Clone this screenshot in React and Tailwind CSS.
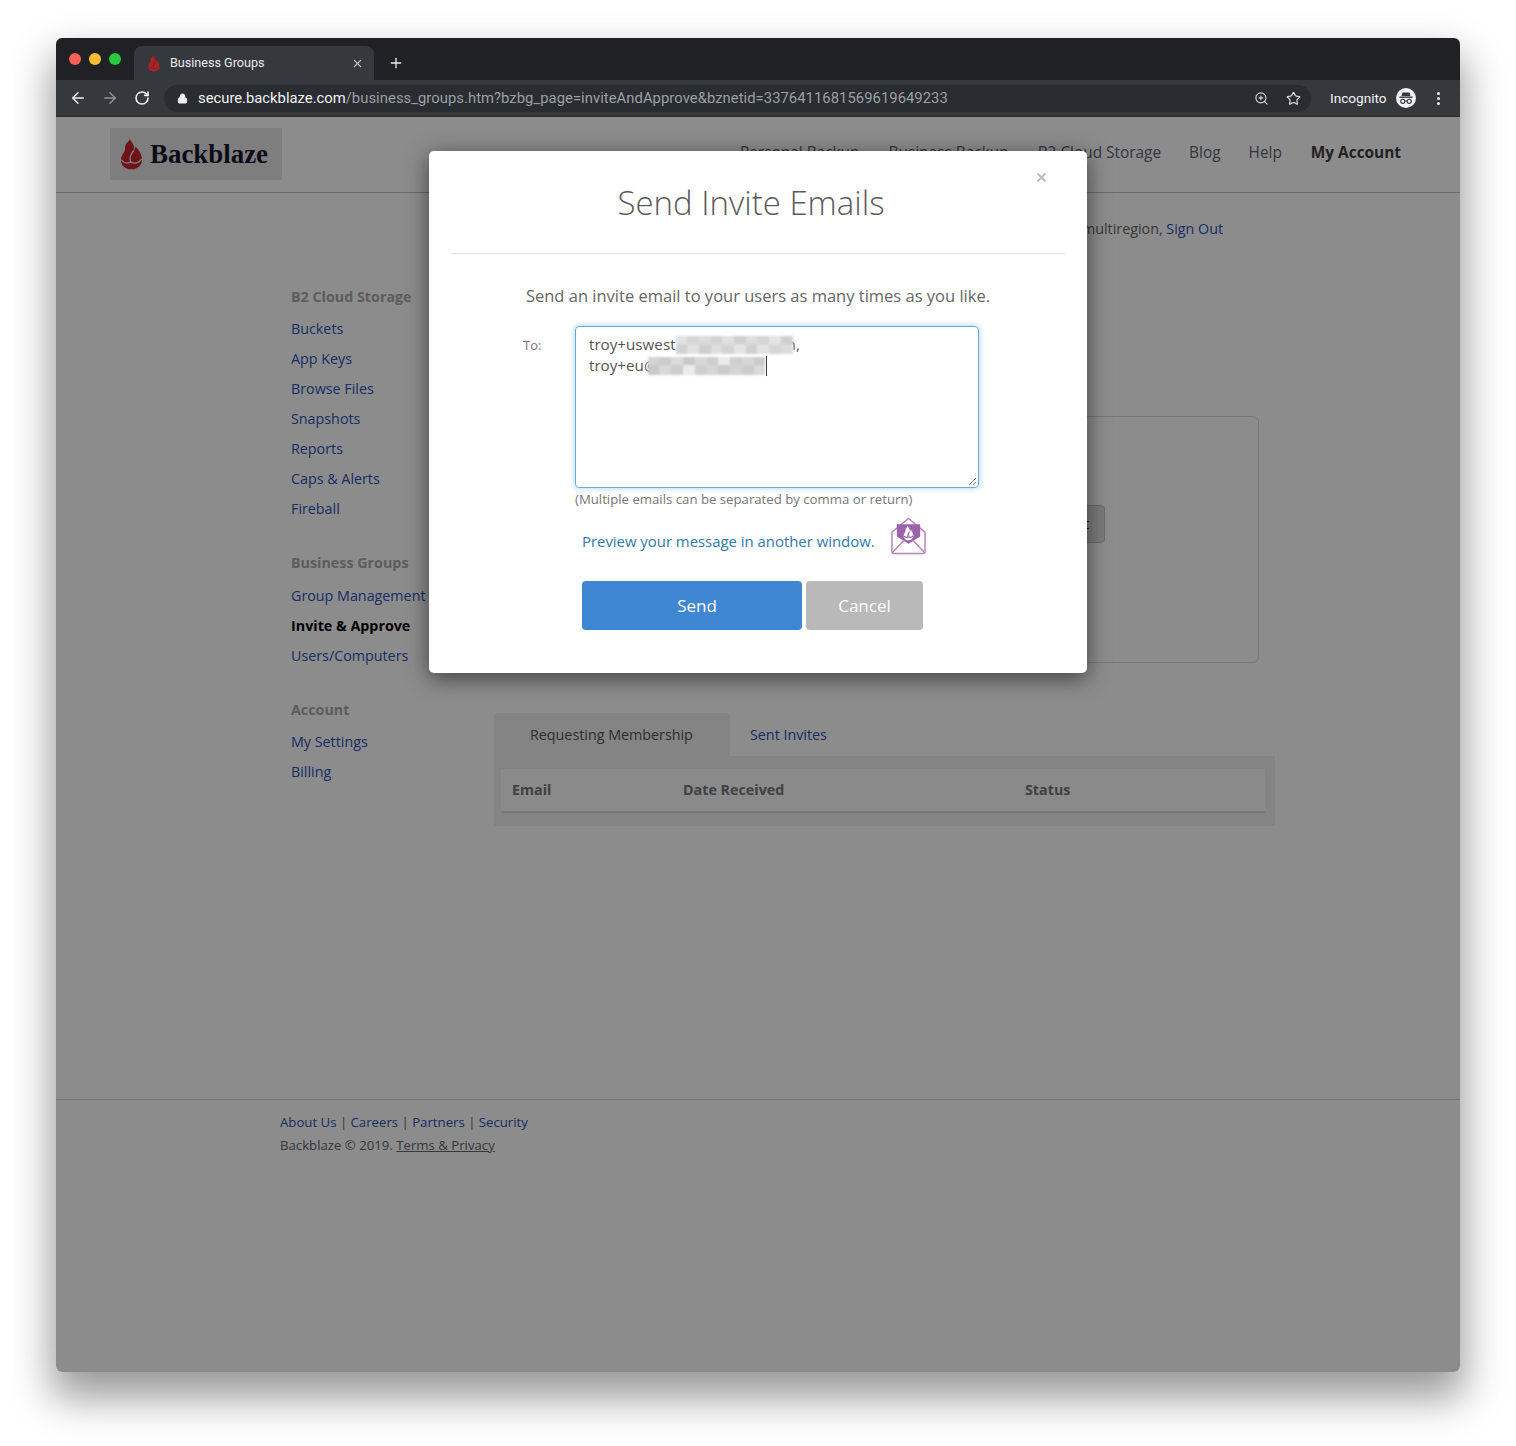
import { ArrowLeft, ArrowRight, RotateCw, Lock, ZoomIn, Star, X, Plus } from 'lucide-react';

const sideGroups = [
  { title: 'B2 Cloud Storage', links: ['Buckets', 'App Keys', 'Browse Files', 'Snapshots', 'Reports', 'Caps & Alerts', 'Fireball'] },
  { title: 'Business Groups', links: ['Group Management', 'Invite & Approve', 'Users/Computers'] },
  { title: 'Account', links: ['My Settings', 'Billing'] },
];

const blurOne = ['#e2e2e2', '#d6d6d6', '#dcdcdc', '#d2d2d2', '#e0e0e0', '#cfcfcf', '#dddddd', '#d4d4d4', '#e4e4e4', '#d0d0d0'];
const blurTwo = ['#d4d4d4', '#cccccc', '#dadada', '#c9c9c9', '#d8d8d8', '#cdcdcd', '#ebebeb', '#cfcfcf', '#d6d6d6', '#cbcbcb'];

const flameBody = 'M10 0C10.500 3.500 15 6.500 15 11c0 1-.2 2-.5 3 1.500-1.500 2-3 2-4.500C19 12.500 24 17 24 24.500 24 31 18.500 35.500 12 35.500S0 31.500 0 25c0-5 2.500-7.500 4-10 1-2.500.5-4 1-7 1-3 5-4 5-8z';

function Flame({ className, color = '#a3171d', gap = '#e6e6e6' }) {
  return (
    <svg className={className} viewBox="0 0 24 36" fill="none">
      <path fill={color} d={flameBody} />
      <path stroke={gap} strokeWidth="1.500" strokeLinecap="round" d="M.5 25c3.500 4 7.500 4 10.500 2 3.500 2 8.500 2 12.500-3" />
      <path stroke={gap} strokeWidth="1.500" strokeLinecap="round" d="M11 27c-2-5 0-8 3.500-13" />
    </svg>
  );
}

function EnvelopeIcon() {
  return (
    <svg className="w-[35px] h-[38px]" viewBox="0 0 36 38" fill="none">
      <path d="M1 15 18 1l17 14v20.500a1.500 1.500 0 0 1-1.500 1.500h-31A1.500 1.500 0 0 1 1 35.500z" stroke="#b583bd" strokeWidth="1.500" strokeLinejoin="round" />
      <path d="M1.500 36 13 24M34.500 36 23 24" stroke="#b583bd" strokeWidth="1.500" />
      <path d="M6 7h24v12.500L18 27 6 19.500z" fill="#9d62a9" />
      <g transform="translate(13 8.500) scale(.42)">
        <path fill="#ffffff" d={flameBody} />
        <path stroke="#9d62a9" strokeWidth="3" d="M.5 25c3.500 4 7.500 4 10.500 2 3.500 2 8.500 2 12.500-3M11 27c-2-5 0-8 3.500-13" />
      </g>
    </svg>
  );
}

function IncognitoIcon() {
  return (
    <svg className="w-[20px] h-[20px]" viewBox="0 0 20 20">
      <circle cx="10" cy="10" r="10" fill="#f1f3f4" />
      <path d="M6.500 4.500h7l1 3.500h-9z" fill="#35383c" />
      <rect x="3.500" y="8.500" width="13" height="1.400" fill="#35383c" />
      <circle cx="6.800" cy="13.300" r="2.100" fill="none" stroke="#35383c" strokeWidth="1.100" />
      <circle cx="13.200" cy="13.300" r="2.100" fill="none" stroke="#35383c" strokeWidth="1.100" />
      <path d="M8.900 13h2.200" stroke="#35383c" strokeWidth="1" />
    </svg>
  );
}

function BlurBlocks({ colors, width, className = '' }) {
  return (
    <span className={`relative inline-flex h-[18px] align-[-4px] blur-[1px] ${className}`} style={{ width }}>
      {colors.map((c, i) => (
        <span key={i} className="flex-1 h-full" style={{ background: `linear-gradient(${c} 45%, ${colors[(i + 3) % colors.length]} 45%)` }} />
      ))}
    </span>
  );
}

function BrowserBar() {
  return (
    <div className="font-['Roboto',sans-serif]">
      <div className="h-[42px] bg-[#202124] flex items-end rounded-t-[6px]">
        <div className="flex gap-[8px] pl-[13px] w-[78px] h-full pt-[15px]">
          <span className="w-[12px] h-[12px] rounded-full bg-[#ff5f57]" />
          <span className="w-[12px] h-[12px] rounded-full bg-[#febc2e]" />
          <span className="w-[12px] h-[12px] rounded-full bg-[#28c840]" />
        </div>
        <div className="w-[240px] h-[34px] bg-[#35383c] rounded-t-[8px] flex items-center pl-[14px] pr-[10px]">
          <Flame className="w-[12px] h-[17px] mr-[10px]" color="#b01f25" gap="#35383c" />
          <span className="flex-1 text-[12.600px] text-[#e8eaed]">Business Groups</span>
          <X className="w-[13px] h-[13px] text-[#bdc1c6]" strokeWidth={2} />
        </div>
        <div className="h-[34px] flex items-center pl-[14px]">
          <Plus className="w-[16px] h-[16px] text-[#e8eaed]" strokeWidth={2} />
        </div>
      </div>
      <div className="h-[37px] bg-[#35383c] border-b border-[#2a2c2f] flex items-center pl-[13px] pr-[14px]">
        <ArrowLeft className="w-[18px] h-[18px] text-[#eef0f1]" strokeWidth={2} />
        <ArrowRight className="w-[18px] h-[18px] ml-[14px] text-[#8f9295]" strokeWidth={2} />
        <RotateCw className="w-[16px] h-[16px] ml-[15px] text-[#eef0f1]" strokeWidth={2.4} />
        <div className="ml-[14px] w-[1147px] h-[27px] bg-[#292c30] rounded-full flex items-center pl-[13px] pr-[10px]">
          <Lock className="w-[11px] h-[11px] text-[#eef0f1] fill-[#eef0f1]" strokeWidth={2} />
          <span className="ml-[10px] flex-1 text-[14.800px] text-[#9aa0a6] whitespace-nowrap tracking-[0.05px]">
            <span className="text-[#f1f3f4] tracking-normal">secure.backblaze.com</span>/business_groups.htm?bzbg_page=inviteAndApprove&bznetid=3376411681569619649233
          </span>
          <ZoomIn className="w-[15px] h-[15px] -ml-[1px] text-[#d5d7d9]" strokeWidth={1.8} />
          <Star className="w-[15px] h-[15px] ml-[17px] text-[#e3e5e7]" strokeWidth={1.8} />
        </div>
        <span className="ml-[19px] text-[13.600px] text-[#f1f3f4]">Incognito</span>
        <span className="ml-[9px]"><IncognitoIcon /></span>
        <span className="ml-[21px] flex flex-col gap-[2px]">
          <span className="w-[3px] h-[3px] rounded-full bg-[#e8eaed]" />
          <span className="w-[3px] h-[3px] rounded-full bg-[#e8eaed]" />
          <span className="w-[3px] h-[3px] rounded-full bg-[#e8eaed]" />
        </span>
      </div>
    </div>
  );
}

function SiteHeader() {
  return (
    <div className="h-[76px] border-b border-[#c4c4c4] flex items-start pl-[54px]">
      <div className="mt-[11px] w-[172px] h-[52px] bg-[#e6e6e6] flex items-center pl-[11px]">
        <Flame className="w-[21px] h-[34px]" color="#c5262c" />
        <span className="ml-[8px] font-['Liberation_Serif',serif] font-bold text-[26.900px] text-[#15152e] leading-none">Backblaze</span>
      </div>
      <nav className="ml-[458px] mt-[24px] flex text-[15.400px] leading-[24px] text-[#5c6470] whitespace-nowrap">
        <span>Personal Backup</span>
        <span className="ml-[29px]">Business Backup</span>
        <span className="ml-[29px]">B2 Cloud Storage</span>
        <span className="ml-[28px]">Blog</span>
        <span className="ml-[28px]">Help</span>
        <span className="ml-[29px] font-bold text-[#3d3d3d]">My Account</span>
      </nav>
    </div>
  );
}

function Sidebar() {
  return (
    <aside className="w-[204px] pt-[92px] text-[14.300px]">
      {sideGroups.map((g, gi) => (
        <div key={g.title} className={gi > 0 ? 'mt-[27px]' : ''}>
          <div className={`font-bold text-[#a9a9a9] leading-[24px] ${gi === 1 ? 'mb-[6px]' : 'mb-[5px]'}`}>{g.title}</div>
          {g.links.map(l => (
            <div key={l} className={`h-[30px] leading-[30px] whitespace-nowrap ${l === 'Invite & Approve' ? 'font-bold text-black' : 'text-[#2f52b8]'}`}>{l}</div>
          ))}
        </div>
      ))}
    </aside>
  );
}

function MainColumn() {
  return (
    <main className="w-[781px] -ml-[1px]">
      <div className="pt-[24px] pr-[52px] text-right text-[14.300px] leading-[24px] text-[#666666]">
        Signed in as multiregion, <span className="text-[#2f52b8]">Sign Out</span>
      </div>
      <div className="mt-[175px] w-[765px] h-[247px] border border-[#d9d9d9] rounded-[6px] relative">
        <div className="absolute right-[153px] top-[88px] h-[38px] border border-[#c4c4c4] rounded-[4px] bg-[#e2e2e2] pl-[20px] pr-[15px] text-[14.300px] leading-[36px] text-[#222222]">Edit</div>
      </div>
      <div className="mt-[50px] flex text-[14.300px] h-[43px]">
        <div className="w-[236px] bg-[#f0f0f0] rounded-t-[4px] pl-[36px] leading-[44px] text-[#555555]">Requesting Membership</div>
        <div className="pl-[20px] leading-[44px] text-[#2f52b8]">Sent Invites</div>
      </div>
      <div className="bg-[#f0f0f0] pl-[7px] pr-[10px] pt-[13px] pb-[13px]">
        <div className="h-[44px] bg-[#fbfbfb] border-b-2 border-[#d8d8d8] flex items-center font-bold text-[14.300px] text-[#777777]">
          <span className="pl-[11px] w-[182px]">Email</span>
          <span className="w-[342px]">Date Received</span>
          <span>Status</span>
        </div>
      </div>
    </main>
  );
}

function SiteFooter() {
  return (
    <footer className="mt-[273px] border-t border-[#d6d6d6] pl-[224px] pt-[11px] text-[13.200px] leading-[23px] text-[#666666]">
      <div>
        <span className="text-[#2f52b8]">About Us</span> | <span className="text-[#2f52b8]">Careers</span> | <span className="text-[#2f52b8]">Partners</span> | <span className="text-[#2f52b8]">Security</span>
      </div>
      <div>Backblaze © 2019. <span className="underline">Terms &amp; Privacy</span></div>
    </footer>
  );
}

function InviteModal() {
  return (
    <div className="absolute left-[373px] top-[34px] w-[658px] h-[522px] bg-white rounded-[5px] shadow-[0_5px_22px_rgba(0,0,0,0.55)]">
      <X className="absolute right-[39px] top-[20px] w-[13px] h-[13px] text-[#bdbdbd]" strokeWidth={4} />
      <h2 className="pt-[29px] pr-[14px] h-[102px] text-center font-light text-[33px] leading-[46px] text-[#5c5c5c]">Send Invite Emails</h2>
      <div className="mx-[22px] border-t border-[#e3e3e3]" />
      <p className="mt-[31px] text-center text-[16.500px] leading-[22px] text-[#666666]">Send an invite email to your users as many times as you like.</p>
      <div className="mt-[19px] flex items-start pl-[94px]">
        <label className="w-[52px] pt-[10px] text-[13px] leading-[18px] text-[#777777]">To:</label>
        <div className="relative w-[404px] h-[162px] border border-[#6fa8d3] rounded-[4px] shadow-[0_0_6px_rgba(102,175,233,0.6)] pl-[13px] pt-[7px] text-[15.200px] leading-[21px] text-[#555555] whitespace-nowrap">
          <div>troy+uswest<BlurBlocks colors={blurOne} width={117} /><span className="-ml-[6px]">n,</span></div>
          <div className="flex items-center">
            <span>troy+eu@</span>
            <BlurBlocks colors={blurTwo} width={118} className="-ml-[10px]" />
            <span className="w-px h-[20px] bg-[#333333]" />
          </div>
          <svg className="absolute right-[1px] bottom-[1px] w-[9px] h-[9px]" viewBox="0 0 9 9">
            <path d="M1 8 8 1M5 8l3-3" stroke="#777777" strokeWidth="0.900" />
          </svg>
        </div>
      </div>
      <p className="pl-[146px] mt-[2px] text-[13.200px] leading-[18px] text-[#777777]">(Multiple emails can be separated by comma or return)</p>
      <div className="mt-[10px] pl-[153px] flex items-center h-[38px]">
        <span className="text-[14.900px] text-[#2f79ad] pt-[8px]">Preview your message in another window.</span>
        <span className="ml-[16px] -mt-[2px]"><EnvelopeIcon /></span>
      </div>
      <div className="mt-[25px] pl-[153px] flex gap-[4px] text-[17px] font-medium text-white">
        <button className="w-[220px] h-[49px] pl-[10px] bg-[#3f87d2] rounded-[4px]">Send</button>
        <button className="w-[117px] h-[49px] bg-[#b9b9b9] rounded-[4px]">Cancel</button>
      </div>
    </div>
  );
}

export default function App() {
  return (
    <div className="w-[1516px] h-[1446px] bg-white pt-[38px] pl-[56px] font-['Open_Sans',sans-serif] overflow-hidden">
      <div className="w-[1404px] h-[1334px] rounded-[6px] shadow-[0_22px_40px_4px_rgba(0,0,0,0.4)] flex flex-col">
        <BrowserBar />
        <div className="relative flex-1 bg-white rounded-b-[6px] overflow-hidden">
          <SiteHeader />
          <div className="flex pl-[235px]">
            <Sidebar />
            <MainColumn />
          </div>
          <SiteFooter />
          <div className="absolute inset-0 bg-black/45" />
          <InviteModal />
        </div>
      </div>
    </div>
  );
}
